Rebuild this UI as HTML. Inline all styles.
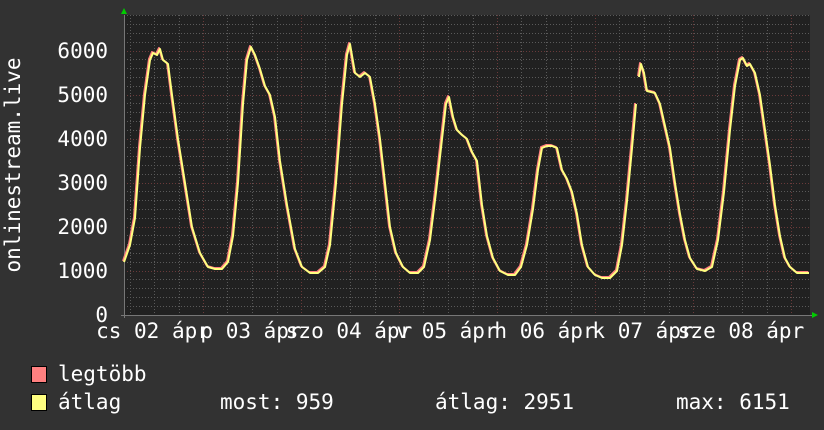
<!DOCTYPE html>
<html><head><meta charset="utf-8"><style>
html,body{margin:0;padding:0;background:#323232;}
svg{display:block}
text{font-family:"DejaVu Sans Mono","Liberation Mono",monospace;font-size:21px;fill:#fff}
</style></head><body>
<svg width="824" height="430" viewBox="0 0 824 430" xmlns="http://www.w3.org/2000/svg">
<rect width="824" height="430" fill="#323232"/>
<rect x="124" y="15" width="686" height="300" fill="#212121"/>
<g stroke="#5a5a5a" stroke-width="1" stroke-dasharray="1,2" shape-rendering="crispEdges">
<path d="M124 306.5H810M124 297.5H810M124 288.5H810M124 279.5H810M124 262.5H810M124 253.5H810M124 244.5H810M124 235.5H810M124 218.5H810M124 209.5H810M124 200.5H810M124 191.5H810M124 174.5H810M124 165.5H810M124 156.5H810M124 147.5H810M124 130.5H810M124 121.5H810M124 112.5H810M124 103.5H810M124 86.5H810M124 77.5H810M124 68.5H810M124 59.5H810M124 42.5H810M124 33.5H810M124 24.5H810M124 15.5H810"/>
<path d="M130.5 15V315M154.5 15V315M179.5 15V315M227.5 15V315M252.5 15V315M277.5 15V315M325.5 15V315M350.5 15V315M375.5 15V315M423.5 15V315M448.5 15V315M473.5 15V315M521.5 15V315M546.5 15V315M571.5 15V315M619.5 15V315M644.5 15V315M669.5 15V315M717.5 15V315M742.5 15V315M767.5 15V315"/>
</g>
<g stroke="#6a3a3a" stroke-width="1" stroke-dasharray="1,2" shape-rendering="crispEdges">
<path d="M124 271.5H810M124 227.5H810M124 183.5H810M124 139.5H810M124 95.5H810M124 51.5H810"/>
<path d="M203.5 15V315M301.5 15V315M399.5 15V315M497.5 15V315M595.5 15V315M693.5 15V315M791.5 15V315"/>
</g>
<line x1="124.5" y1="15" x2="124.5" y2="318" stroke="#777"/>
<line x1="121" y1="315.5" x2="812" y2="315.5" stroke="#777"/>
<polygon points="124,8 121,14 127,14" fill="#00cc00"/>
<polygon points="818,315 812,312 812,318" fill="#00cc00"/>
<g fill="none" stroke-linejoin="round">
<polyline transform="translate(-1,-1)" stroke="#ff8080" stroke-width="2" points="124,262 130,245 135,218 140,148 145,95 150,60 153,53 157,55 160,49 163,60 168,64 172,95 178,139 185,183 192,227 200,253 208,267 215,269 222,269 228,262 233,236 238,183 243,104 247,60 251,47 255,55 260,69 265,86 270,95 275,117 280,161 287,205 295,249 302,267 310,273 318,273 325,267 330,245 336,183 342,104 347,55 350,44 355,73 360,77 365,73 370,77 375,104 380,139 385,183 390,227 396,253 403,267 410,273 418,273 424,267 430,240 436,192 442,139 446,104 449,97 453,117 457,130 462,135 467,139 472,152 477,161 482,205 487,236 493,258 500,271 508,275 515,275 521,267 527,245 533,209 538,170 542,148 547,146 552,146 557,148 562,170 567,179 572,192 577,214 582,245 588,267 595,275 602,278 610,278 617,271 622,245 627,201 632,148 636,104"/>
<polyline transform="translate(-1,-1)" stroke="#ff8080" stroke-width="2" points="639,77 641,64 644,73 647,91 655,93 660,104 665,126 670,148 675,183 680,214 685,240 690,258 697,269 705,271 712,267 718,240 724,192 730,130 735,86 740,60 743,58 747,66 750,64 755,73 760,95 765,130 770,165 775,205 780,236 785,258 790,267 797,273 805,273 809,273"/>
<polyline stroke="#ffff80" stroke-width="2" points="124,262 130,245 135,218 140,148 145,95 150,60 153,53 157,55 160,49 163,60 168,64 172,95 178,139 185,183 192,227 200,253 208,267 215,269 222,269 228,262 233,236 238,183 243,104 247,60 251,47 255,55 260,69 265,86 270,95 275,117 280,161 287,205 295,249 302,267 310,273 318,273 325,267 330,245 336,183 342,104 347,55 350,44 355,73 360,77 365,73 370,77 375,104 380,139 385,183 390,227 396,253 403,267 410,273 418,273 424,267 430,240 436,192 442,139 446,104 449,97 453,117 457,130 462,135 467,139 472,152 477,161 482,205 487,236 493,258 500,271 508,275 515,275 521,267 527,245 533,209 538,170 542,148 547,146 552,146 557,148 562,170 567,179 572,192 577,214 582,245 588,267 595,275 602,278 610,278 617,271 622,245 627,201 632,148 636,104"/>
<polyline stroke="#ffff80" stroke-width="2" points="639,77 641,64 644,73 647,91 655,93 660,104 665,126 670,148 675,183 680,214 685,240 690,258 697,269 705,271 712,267 718,240 724,192 730,130 735,86 740,60 743,58 747,66 750,64 755,73 760,95 765,130 770,165 775,205 780,236 785,258 790,267 797,273 805,273 809,273"/>
</g>
<g text-anchor="end">
<text x="108" y="58">6000</text>
<text x="108" y="102">5000</text>
<text x="108" y="146">4000</text>
<text x="108" y="190">3000</text>
<text x="108" y="234">2000</text>
<text x="108" y="278">1000</text>
<text x="108" y="322">0</text>
</g>
<text transform="translate(20,165) rotate(-90)" text-anchor="middle">onlinestream.live</text>
<g text-anchor="middle">
<text x="153" y="338">cs 02 ápr</text>
<text x="251" y="338">p 03 ápr</text>
<text x="349" y="338">szo 04 ápr</text>
<text x="447" y="338">v 05 ápr</text>
<text x="545" y="338">h 06 ápr</text>
<text x="643" y="338">k 07 ápr</text>
<text x="741" y="338">sze 08 ápr</text>
</g>
<rect x="31.5" y="366.5" width="15" height="16" fill="#ff8080" stroke="#000"/>
<rect x="31.5" y="394.5" width="15" height="16" fill="#ffff80" stroke="#000"/>
<text x="58" y="381">legtöbb</text>
<text x="58" y="409">átlag</text>
<text x="220" y="409">most: 959</text>
<text x="435" y="409">átlag: 2951</text>
<text x="676" y="409">max: 6151</text>
</svg>
</body></html>
